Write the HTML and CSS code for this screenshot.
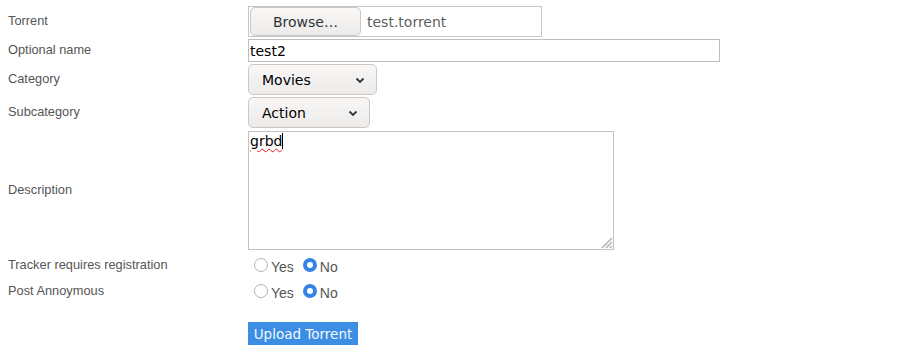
FILE: index.html
```html
<!DOCTYPE html>
<html>
<head>
<meta charset="utf-8">
<link rel="stylesheet" href="styles.css">
</head>
<body>
<form class="upload-form">
  <div class="row row-file">
    <div class="label">Torrent</div>
    <div class="field">
      <div class="file-box">
        <span class="btn browse">Browse…</span>
        <span class="file-name">test.torrent</span>
      </div>
    </div>
  </div>
  <div class="row row-text">
    <div class="label">Optional name</div>
    <div class="field"><input class="text-input" type="text" value="test2"></div>
  </div>
  <div class="row row-select">
    <div class="label">Category</div>
    <div class="field">
      <div class="select select-cat"><span>Movies</span>
        <svg class="chev" width="10" height="7" viewBox="0 0 10 7"><path d="M1.5 1.5 L5 5 L8.5 1.5" fill="none" stroke="#2e3436" stroke-width="1.8"/></svg>
      </div>
    </div>
  </div>
  <div class="row row-select">
    <div class="label">Subcategory</div>
    <div class="field">
      <div class="select select-sub"><span>Action</span>
        <svg class="chev" width="10" height="7" viewBox="0 0 10 7"><path d="M1.5 1.5 L5 5 L8.5 1.5" fill="none" stroke="#2e3436" stroke-width="1.8"/></svg>
      </div>
    </div>
  </div>
  <div class="row row-area">
    <div class="label">Description</div>
    <div class="field">
      <div class="textarea"><span class="misspelled">grbd</span><span class="caret"></span>
        <svg class="grip" width="14" height="14" viewBox="0 0 14 14"><path d="M13 3 L3 13 M13 7 L7 13 M13 11 L11 13" stroke="#b8b6b2" stroke-width="1.6"/></svg>
      </div>
    </div>
  </div>
  <div class="row row-radio">
    <div class="label">Tracker requires registration</div>
    <div class="field radios">
      <label class="opt"><span class="radio"></span>Yes</label>
      <label class="opt"><span class="radio checked"></span>No</label>
    </div>
  </div>
  <div class="row row-radio">
    <div class="label">Post Annoymous</div>
    <div class="field radios">
      <label class="opt"><span class="radio"></span>Yes</label>
      <label class="opt"><span class="radio checked"></span>No</label>
    </div>
  </div>
  <div class="row row-submit">
    <div class="label"></div>
    <div class="field"><button type="button" class="submit">Upload Torrent</button></div>
  </div>
</form>
</body>
</html>
```
FILE: styles.css
```css
html, body {
  margin: 0;
  padding: 0;
  background: #fff;
}
body {
  font-family: "Liberation Sans", Arial, sans-serif;
}
.upload-form {
  padding: 6px 0 0 8px;
  display: flex;
  flex-direction: column;
}
.row {
  display: flex;
  align-items: center;
}
.label {
  width: 240px;
  flex: none;
  font-size: 12.8px;
  color: #555;
  margin-top: -2px;
}
.field {
  display: flex;
  align-items: center;
}
.row-file { height: 31px; margin-bottom: 2px; }
.row-text { height: 23px; margin-bottom: 2px; }
.row-select { height: 31px; margin-bottom: 2px; }
.row-area { height: 119px; margin-top: 1px; margin-bottom: 2px; }
.row-area .label { margin-top: -2px; }
.row-radio { height: 26px; }
.row-radio .label { margin-top: -1px; }
.row-submit { margin-top: 18px; height: 23px; }

.file-box {
  width: 294px;
  height: 31px;
  box-sizing: border-box;
  border: 1px solid #c6c6c6;
  display: flex;
  align-items: center;
  padding-left: 1px;
}
.btn {
  font-family: "DejaVu Sans", sans-serif;
  font-size: 14px;
  color: #2e3436;
  background: linear-gradient(#f8f7f6, #edebe9);
  border: 1px solid #cdc7c2;
  border-radius: 5px;
  box-sizing: border-box;
  display: flex;
  align-items: center;
}
.browse {
  width: 111px;
  height: 29px;
  justify-content: center;
}
.file-name {
  font-family: "DejaVu Sans", sans-serif;
  font-size: 14px;
  color: #5f5f5f;
  margin-left: 6px;
}
.text-input {
  width: 472px;
  height: 23px;
  box-sizing: border-box;
  border: 1px solid #bdbdbd;
  padding: 0 0 0 1px;
  margin: 0;
  font-family: "DejaVu Sans", sans-serif;
  font-size: 14px;
  color: #000;
  outline: none;
}
.select {
  font-family: "DejaVu Sans", sans-serif;
  font-size: 14px;
  color: #000;
  height: 31px;
  box-sizing: border-box;
  border: 1px solid #cdc7c2;
  border-radius: 5px;
  background: linear-gradient(#f8f7f6, #edebe9);
  display: flex;
  align-items: center;
  justify-content: space-between;
  padding: 0 11px 0 13px;
}
.select-cat { width: 129px; }
.select-sub { width: 122px; }
.chev { flex: none; margin-top: 1px; }
.textarea {
  position: relative;
  width: 366px;
  height: 119px;
  box-sizing: border-box;
  border: 1px solid #c6c3be;
  font-family: "DejaVu Sans", sans-serif;
  font-size: 14px;
  color: #000;
  padding: 1px 0 0 1px;
  line-height: 17px;
  align-self: flex-start;
}
.misspelled {
  text-decoration: underline wavy #e01b24;
  text-decoration-thickness: 1px;
  text-underline-offset: 2px;
}
.caret {
  display: inline-block;
  width: 1px;
  height: 16px;
  background: #000;
  vertical-align: -3px;
}
.grip {
  position: absolute;
  right: 0;
  bottom: 0;
}
.radios {
  padding-left: 6px;
}
.opt {
  display: flex;
  align-items: center;
  font-family: "Liberation Sans", Arial, sans-serif;
  font-size: 14px;
  color: #555;
  margin-right: 9px;
  padding-top: 3px;
}
.radio {
  width: 14px;
  height: 14px;
  box-sizing: border-box;
  border: 1px solid #b6b3ae;
  border-radius: 50%;
  background: #fff;
  margin-right: 3px;
  margin-top: -4px;
}
.radio.checked {
  border: 4px solid #3584e4;
  background: #fff;
}
.submit {
  width: 110px;
  height: 23px;
  margin: 0;
  padding: 0;
  border: none;
  background: #3b8ee3;
  color: #f4f8fd;
  font-family: "DejaVu Sans", sans-serif;
  font-size: 13.5px;
}
```
